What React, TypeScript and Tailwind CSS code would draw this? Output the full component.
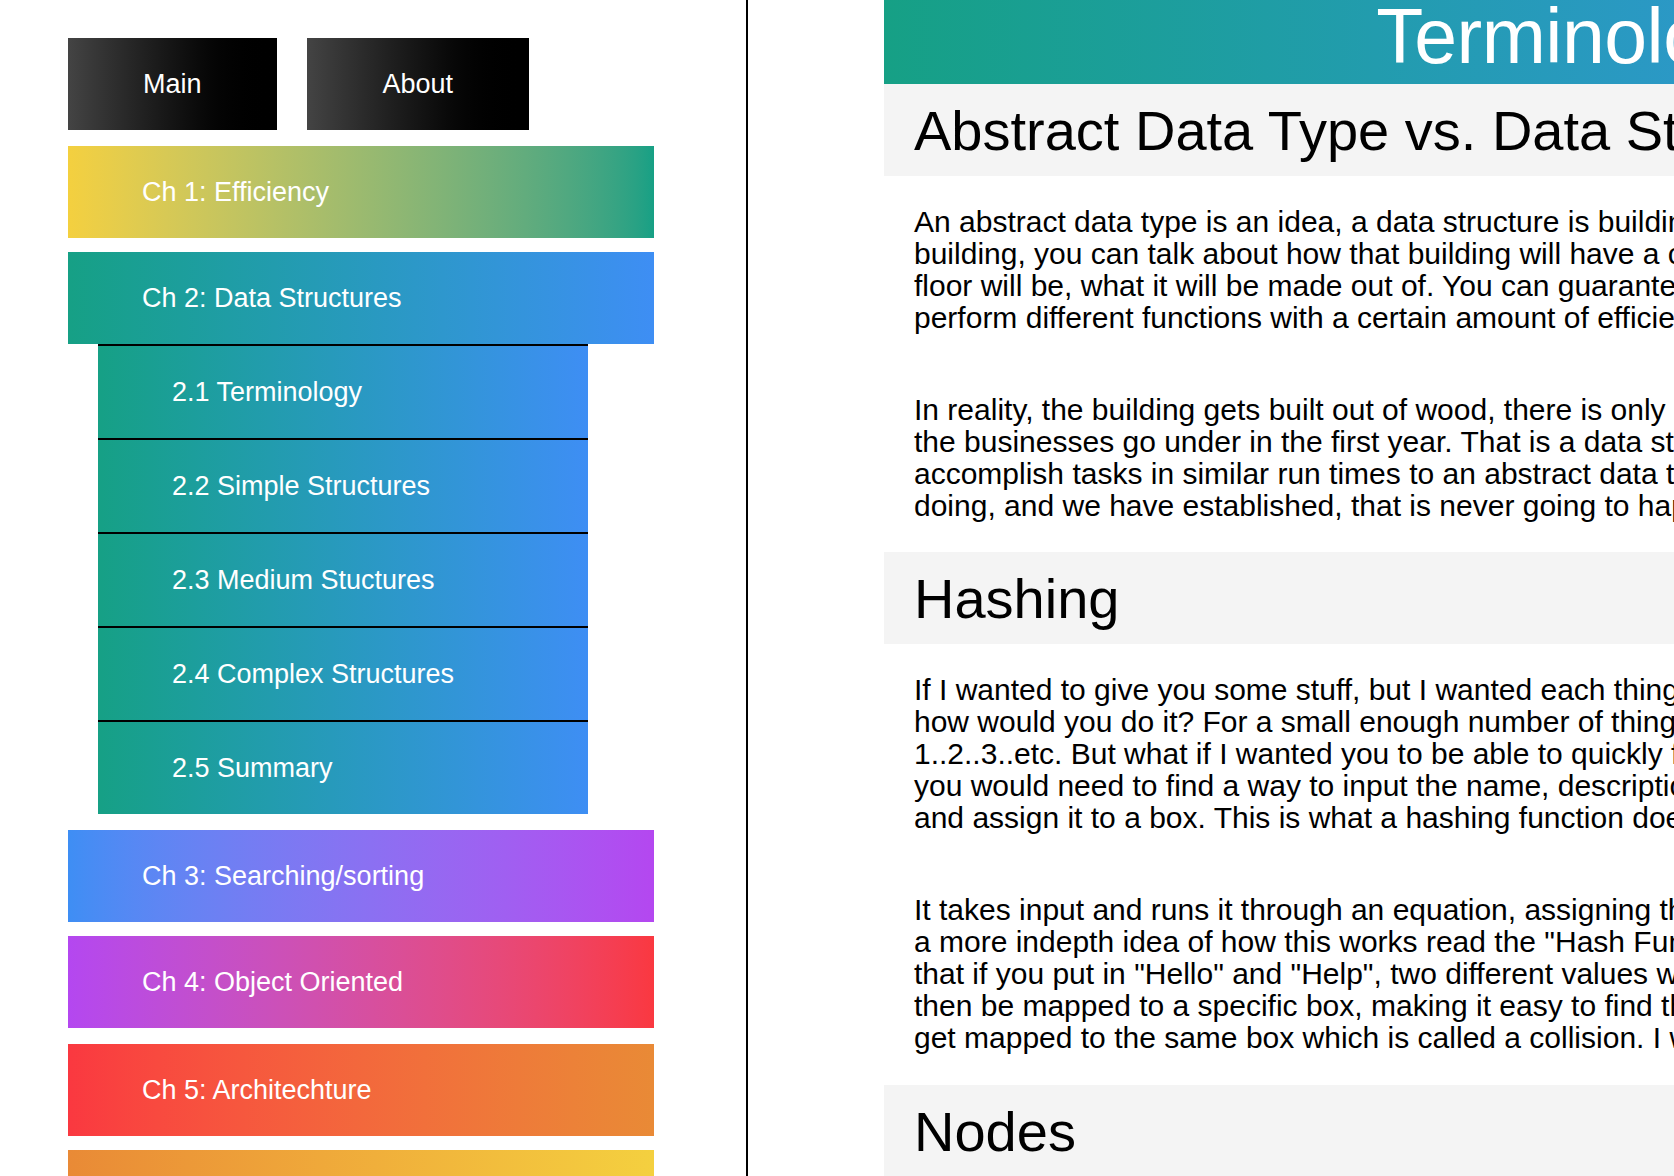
import React from "react";

const chapters = [
  { label: "Ch 1: Efficiency", cls: "bg-gradient-to-r from-[#f4d03f] to-[#16a085]", mt: "mt-[16px]" },
  { label: "Ch 2: Data Structures", cls: "bg-gradient-to-r from-[#16a085] to-[#3e8ef4]", mt: "mt-[14px]" },
];

const later = [
  { label: "Ch 3: Searching/sorting", cls: "bg-gradient-to-r from-[#3e8ef4] to-[#b447f0]", mt: "mt-[16px]" },
  { label: "Ch 4: Object Oriented", cls: "bg-gradient-to-r from-[#b447f0] to-[#fa3840]", mt: "mt-[14px]" },
  { label: "Ch 5: Architechture", cls: "bg-gradient-to-r from-[#fa3840] to-[#e98a36]", mt: "mt-[16px]" },
  { label: "Ch 6: Networking", cls: "bg-gradient-to-r from-[#e98a36] to-[#f4d03f]", mt: "mt-[14px]" },
];

const subs = [
  "2.1 Terminology",
  "2.2 Simple Structures",
  "2.3 Medium Stuctures",
  "2.4 Complex Structures",
  "2.5 Summary",
];

function ChapterBar({ label, cls, mt }: { label: string; cls: string; mt: string }) {
  return (
    <div className={`${mt} ${cls} w-[586px] h-[92px] flex items-center pl-[74px] text-white text-[27px]`}>
      {label}
    </div>
  );
}

function Para({ lines, mt }: { lines: string[]; mt: string }) {
  return (
    <div className={`${mt} px-[30px] text-[30px] leading-[32px] text-black`}>
      {lines.map((l, i) => (
        <div key={i} className="whitespace-nowrap">
          {l}
        </div>
      ))}
    </div>
  );
}

function Band({ title, mt }: { title: string; mt: string }) {
  return (
    <div className={`${mt} bg-[#f4f4f4] h-[92px] flex items-center px-[30px] pt-[2px] text-[56px] text-black whitespace-nowrap`}>
      {title}
    </div>
  );
}

export default function App() {
  return (
    <div className="w-[1674px] h-[1176px] overflow-hidden flex bg-white font-['Liberation_Sans',Arial,Helvetica,sans-serif]">
      <nav className="w-[746px] shrink-0 pl-[68px] pt-[38px]">
        <div className="flex gap-[30px]">
          <div className="h-[92px] px-[75px] flex items-center text-white text-[27px] bg-gradient-to-r from-[#444444] to-[#000000]">
            Main
          </div>
          <div className="h-[92px] px-[76px] flex items-center text-white text-[27px] bg-gradient-to-r from-[#444444] to-[#000000]">
            About
          </div>
        </div>
        {chapters.map((c) => (
          <ChapterBar key={c.label} {...c} />
        ))}
        <div className="ml-[30px] w-[490px]">
          {subs.map((s) => (
            <div
              key={s}
              className="h-[94px] border-t-2 border-black flex items-center pl-[74px] text-white text-[27px] bg-gradient-to-r from-[#16a085] to-[#3e8ef4]"
            >
              {s}
            </div>
          ))}
        </div>
        {later.map((c) => (
          <ChapterBar key={c.label} {...c} />
        ))}
      </nav>
      <div className="w-[2px] shrink-0 bg-black" />
      <main className="shrink-0 pl-[136px] w-[1600px]">
        <div className="w-[1394px] h-[84px] bg-gradient-to-r from-[#16a085] to-[#3e8ef4] text-center text-white text-[77px] leading-[72px] tracking-[-0.5px] whitespace-nowrap">
          Terminology
        </div>
        <div className="w-[1408px]">
          <Band title="Abstract Data Type vs. Data Structure" mt="mt-0" />
          <Para
            mt="mt-[30px]"
            lines={[
              "An abstract data type is an idea, a data structure is building. When you design a",
              "building, you can talk about how that building will have a certain number of floors, how big",
              "floor will be, what it will be made out of. You can guarantee it will be able to",
              "perform different functions with a certain amount of efficiency.",
            ]}
          />
          <Para
            mt="mt-[60px]"
            lines={[
              "In reality, the building gets built out of wood, there is only one floor, and",
              "the businesses go under in the first year. That is a data structure. It tries to",
              "accomplish tasks in similar run times to an abstract data type, but that is what it is",
              "doing, and we have established, that is never going to happen perfectly.",
            ]}
          />
          <Band title="Hashing" mt="mt-[30px]" />
          <Para
            mt="mt-[30px]"
            lines={[
              "If I wanted to give you some stuff, but I wanted each thing to be found quickly,",
              "how would you do it? For a small enough number of things you could number them",
              "1..2..3..etc. But what if I wanted you to be able to quickly find any item, then",
              "you would need to find a way to input the name, description, or value of an item",
              "and assign it to a box. This is what a hashing function does.",
            ]}
          />
          <Para
            mt="mt-[60px]"
            lines={[
              "It takes input and runs it through an equation, assigning that input a number. For",
              "a more indepth idea of how this works read the \"Hash Function\" page. This means",
              "that if you put in \"Hello\" and \"Help\", two different values will be produced, which",
              "then be mapped to a specific box, making it easy to find them. Sometimes two values",
              "get mapped to the same box which is called a collision. I will explain more later.",
            ]}
          />
          <Band title="Nodes" mt="mt-[31px]" />
        </div>
      </main>
    </div>
  );
}
